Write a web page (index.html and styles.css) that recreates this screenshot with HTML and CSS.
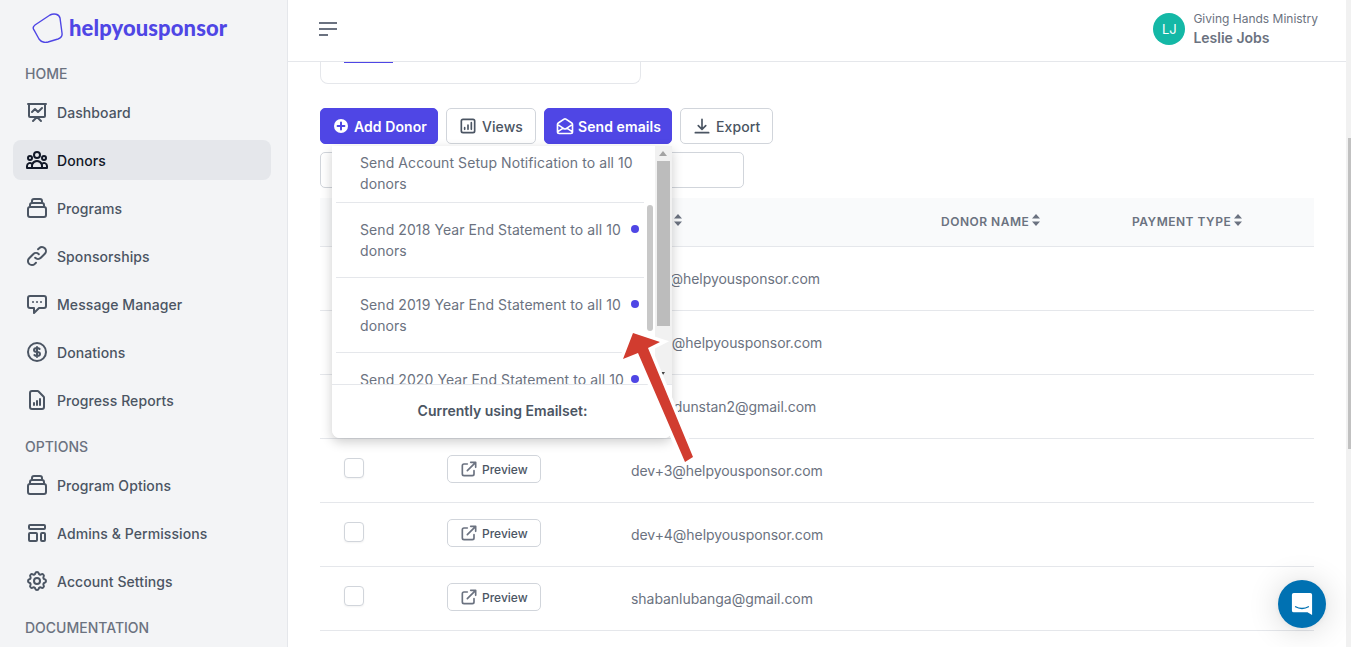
FILE: index.html
```html
<!DOCTYPE html>
<html>

<head>
    <title>Donors</title>
    <link rel="stylesheet" href="styles.css">
</head>

<body>
    <!-- shared icons -->
    <svg class="icon-defs" xmlns="http://www.w3.org/2000/svg">
        <symbol id="i-collection" viewBox="0 0 24 24"><path d="M19 11H5m14 0a2 2 0 012 2v6a2 2 0 01-2 2H5a2 2 0 01-2-2v-6a2 2 0 012-2m14 0V9a2 2 0 00-2-2M5 11V9a2 2 0 012-2m0 0V5a2 2 0 012-2h6a2 2 0 012 2v2M7 7h10"/></symbol>
        <symbol id="i-external" viewBox="0 0 24 24"><path d="M10 6H6a2 2 0 00-2 2v10a2 2 0 002 2h10a2 2 0 002-2v-4M14 4h6m0 0v6m0-6L10 14"/></symbol>
        <symbol id="i-sort" viewBox="0 0 8 12"><path d="M4 0l4 4.500H0zM4 12L0 7.500h8z"/></symbol>
    </svg>

    <div id="app">
        <aside id="sidebar">
            <div class="logo">
                <svg class="logo-mark" viewBox="0 0 32 30"><path d="M2 17C.5 15 1 13.500 3 12L18 2c4-2 9-1 10 3l2 15c.5 3-1 5-4 6l-10 3c-4 1-7 0-9-3z"/></svg>
                <span class="logo-text">helpyousponsor</span>
            </div>

            <div class="nav-label">Home</div>
            <a class="nav-item"><svg class="icon" viewBox="0 0 24 24"><path d="M7 12l3-3 3 3 4-4M8 21l4-4 4 4M3 4h18M4 4h16v12a1 1 0 01-1 1H5a1 1 0 01-1-1V4z"/></svg>Dashboard</a>
            <a class="nav-item active"><svg class="icon" viewBox="0 0 24 24"><path d="M17 20h5v-2a3 3 0 00-5.356-1.857M17 20H7m10 0v-2c0-.656-.126-1.283-.356-1.857M7 20H2v-2a3 3 0 015.356-1.857M7 20v-2c0-.656.126-1.283.356-1.857m0 0a5.002 5.002 0 019.288 0M15 7a3 3 0 11-6 0 3 3 0 016 0zm6 3a2 2 0 11-4 0 2 2 0 014 0zM7 10a2 2 0 11-4 0 2 2 0 014 0z"/></svg>Donors</a>
            <a class="nav-item"><svg class="icon"><use href="#i-collection"/></svg>Programs</a>
            <a class="nav-item"><svg class="icon" viewBox="0 0 24 24"><path d="M13.828 10.172a4 4 0 00-5.656 0l-4 4a4 4 0 105.656 5.656l1.102-1.101m-.758-4.899a4 4 0 005.656 0l4-4a4 4 0 00-5.656-5.656l-1.1 1.1"/></svg>Sponsorships</a>
            <a class="nav-item"><svg class="icon" viewBox="0 0 24 24"><path d="M8 10h.01M12 10h.01M16 10h.01M9 16H5a2 2 0 01-2-2V6a2 2 0 012-2h14a2 2 0 012 2v8a2 2 0 01-2 2h-5l-5 5v-5z"/></svg>Message Manager</a>
            <a class="nav-item"><svg class="icon" viewBox="0 0 24 24"><path d="M12 8c-1.657 0-3 .895-3 2s1.343 2 3 2 3 .895 3 2-1.343 2-3 2m0-8c1.11 0 2.08.402 2.599 1M12 8V7m0 1v8m0 0v1m0-1c-1.11 0-2.08-.402-2.599-1M21 12a9 9 0 11-18 0 9 9 0 0118 0z"/></svg>Donations</a>
            <a class="nav-item"><svg class="icon" viewBox="0 0 24 24"><path d="M9 17v-2m3 2v-4m3 4v-6m2 10H7a2 2 0 01-2-2V5a2 2 0 012-2h5.586a1 1 0 01.707.293l5.414 5.414a1 1 0 01.293.707V19a2 2 0 01-2 2z"/></svg>Progress Reports</a>

            <div class="nav-label">Options</div>
            <a class="nav-item"><svg class="icon"><use href="#i-collection"/></svg>Program Options</a>
            <a class="nav-item"><svg class="icon" viewBox="0 0 24 24"><path d="M4 5a1 1 0 011-1h14a1 1 0 011 1v2a1 1 0 01-1 1H5a1 1 0 01-1-1V5zM4 13a1 1 0 011-1h6a1 1 0 011 1v6a1 1 0 01-1 1H5a1 1 0 01-1-1v-6zM16 13a1 1 0 011-1h2a1 1 0 011 1v6a1 1 0 01-1 1h-2a1 1 0 01-1-1v-6z"/></svg>Admins &amp; Permissions</a>
            <a class="nav-item"><svg class="icon" viewBox="0 0 24 24"><path d="M10.325 4.317c.426-1.756 2.924-1.756 3.35 0a1.724 1.724 0 002.573 1.066c1.543-.94 3.31.826 2.37 2.37a1.724 1.724 0 001.065 2.572c1.756.426 1.756 2.924 0 3.35a1.724 1.724 0 00-1.066 2.573c.94 1.543-.826 3.31-2.37 2.37a1.724 1.724 0 00-2.572 1.065c-.426 1.756-2.924 1.756-3.35 0a1.724 1.724 0 00-2.573-1.066c-1.543.94-3.31-.826-2.37-2.37a1.724 1.724 0 00-1.065-2.572c-1.756-.426-1.756-2.924 0-3.35a1.724 1.724 0 001.066-2.573c-.94-1.543.826-3.31 2.37-2.37.996.608 2.296.07 2.572-1.065z"/><path d="M15 12a3 3 0 11-6 0 3 3 0 016 0z"/></svg>Account Settings</a>

            <div class="nav-label">Documentation</div>
        </aside>

        <div id="main">
            <header id="topbar">
                <svg class="menu-icon" viewBox="0 0 18 14"><path d="M0 1h18M0 7h18M0 13h9"/></svg>
                <div class="user">
                    <div class="avatar">LJ</div>
                    <div>
                        <div class="user-org">Giving Hands Ministry</div>
                        <div class="user-name">Leslie Jobs</div>
                    </div>
                </div>
            </header>

            <div id="content">
                <div class="tab-card"><div class="tab-active"></div></div>

                <div class="toolbar">
                    <button class="btn primary add"><svg class="btn-icon" viewBox="0 0 16 16"><circle cx="8" cy="8" r="7" fill="#fff" stroke="none"/><path class="plus" d="M8 4.600v6.800M4.600 8h6.800"/></svg>Add Donor</button>
                    <button class="btn"><svg class="btn-icon" viewBox="0 0 24 24"><path d="M16 8v8m-4-5v5m-4-2v2m-2 4h12a2 2 0 002-2V6a2 2 0 00-2-2H6a2 2 0 00-2 2v12a2 2 0 002 2z"/></svg>Views</button>
                    <button class="btn primary"><svg class="btn-icon" viewBox="0 0 24 24"><path d="M3 19v-8.930a2 2 0 01.89-1.664l7-4.666a2 2 0 012.220 0l7 4.666A2 2 0 0121 10.070V19M3 19a2 2 0 002 2h14a2 2 0 002-2M3 19l6.750-4.500M21 19l-6.750-4.500M3 10l6.750 4.500M21 10l-6.750 4.500m0 0l-1.140.76a2 2 0 01-2.220 0l-1.140-.76"/></svg>Send emails</button>
                    <button class="btn"><svg class="btn-icon" viewBox="0 0 24 24"><path d="M4 20h16M12 4v12m-4.500-4.500L12 16l4.500-4.500"/></svg>Export</button>
                </div>

                <div class="search-box"></div>

                <table class="donors">
                    <thead>
                        <tr>
                            <th class="col-check"></th>
                            <th class="col-preview"></th>
                            <th class="col-email">Email<svg class="sort"><use href="#i-sort"/></svg></th>
                            <th class="col-name">Donor name<svg class="sort"><use href="#i-sort"/></svg></th>
                            <th>Payment type<svg class="sort"><use href="#i-sort"/></svg></th>
                        </tr>
                    </thead>
                    <tbody>
                        <tr><td><span class="check"></span></td><td><button class="preview"><svg class="preview-icon"><use href="#i-external"/></svg>Preview</button></td><td>dev+1@helpyousponsor.com</td><td></td><td></td></tr>
                        <tr><td><span class="check"></span></td><td><button class="preview"><svg class="preview-icon"><use href="#i-external"/></svg>Preview</button></td><td>dev+2@helpyousponsor.com</td><td></td><td></td></tr>
                        <tr><td><span class="check"></span></td><td><button class="preview"><svg class="preview-icon"><use href="#i-external"/></svg>Preview</button></td><td>philipsdunstan2@gmail.com</td><td></td><td></td></tr>
                        <tr><td><span class="check"></span></td><td><button class="preview"><svg class="preview-icon"><use href="#i-external"/></svg>Preview</button></td><td>dev+3@helpyousponsor.com</td><td></td><td></td></tr>
                        <tr><td><span class="check"></span></td><td><button class="preview"><svg class="preview-icon"><use href="#i-external"/></svg>Preview</button></td><td>dev+4@helpyousponsor.com</td><td></td><td></td></tr>
                        <tr><td><span class="check"></span></td><td><button class="preview"><svg class="preview-icon"><use href="#i-external"/></svg>Preview</button></td><td>shabanlubanga@gmail.com</td><td></td><td></td></tr>
                    </tbody>
                </table>

                <!-- send emails dropdown -->
                <div class="email-menu">
                    <div class="email-list">
                        <div class="email-item first"><span>Send Account Setup Notification to all 10 donors</span></div>
                        <div class="email-item"><span>Send 2018 Year End Statement to all 10 donors</span><i class="dot"></i></div>
                        <div class="email-item"><span>Send 2019 Year End Statement to all 10 donors</span><i class="dot"></i></div>
                        <div class="email-item"><span>Send 2020 Year End Statement to all 10 donors</span><i class="dot"></i></div>
                    </div>
                    <div class="inner-thumb"></div>
                    <div class="menu-scrollbar">
                        <div class="arrow-up"></div>
                        <div class="menu-thumb"></div>
                        <div class="arrow-down"></div>
                    </div>
                    <div class="email-foot">Currently using Emailset:</div>
                </div>

                <!-- red annotation arrow -->
                <svg class="annotation" viewBox="0 0 100 150"><path class="arrow-halo" d="M25 11L52 20 40 26 85 135 77 140 30 31 15 37z"/><path class="arrow-red" d="M25 11L52 20 40 26 85 135 77 140 30 31 15 37z"/></svg>
            </div>
        </div>

        <div class="page-scrollbar"><div class="page-thumb"></div></div>
    </div>

    <div class="chat-bubble">
        <svg viewBox="0 0 24 26"><path d="M3 1h18a2 2 0 012 2v22l-5-3H3a2 2 0 01-2-2V3a2 2 0 012-2z" fill="#fff"/><path d="M5 16c4 2.500 10 2.500 14 0" fill="none" stroke="#0071b2" stroke-width="1.500" stroke-linecap="round"/></svg>
    </div>
</body>

</html>
```

FILE: styles.css
```css
* {
    box-sizing: border-box;
}

html, body {
    margin: 0;
    height: 100%;
    overflow: hidden;
}

body {
    font-family: Inter, "Liberation Sans", sans-serif;
    font-size: 14px;
    color: #4b5563;
    background: #fff;
}

.icon-defs {
    display: none;
}

#app {
    display: flex;
    height: 647px;
}

/* Sidebar */
#sidebar {
    width: 288px;
    flex: none;
    padding: 14px 16px 0 13px;
    background: #f3f4f6;
    border-right: 1px solid #e5e7eb;
    overflow: hidden;
}

.logo {
    display: flex;
    align-items: center;
    height: 28px;
    margin-left: 19px;
    gap: 5px;
}

.logo-mark {
    width: 32px;
    height: 30px;
    flex: none;
    fill: none;
    stroke: #4f46e5;
    stroke-width: 1.400;
}

.logo-text {
    font-family: Lato, sans-serif;
    font-weight: 900;
    font-size: 22px;
    letter-spacing: 0.1px;
    color: #4f46e5;
    position: relative;
    top: -1px;
}

.nav-label {
    margin: 22px 0 8px 12px;
    line-height: 20px;
    font-weight: 500;
    text-transform: uppercase;
    color: #6b7280;
}

.nav-label ~ .nav-label {
    margin-top: 17px;
}

.nav-item {
    display: flex;
    align-items: center;
    height: 40px;
    margin-bottom: 8px;
    padding-left: 12px;
    gap: 8px;
    border-radius: 8px;
    font-weight: 500;
    letter-spacing: 0.08px;
    color: #4b5563;
}

.nav-item:has(+ .nav-label) {
    margin-bottom: 0;
}

.nav-item.active {
    background: #e5e7eb;
    color: #111827;
}

.icon {
    width: 24px;
    height: 24px;
    flex: none;
    fill: none;
    stroke: currentColor;
    stroke-width: 2;
    stroke-linecap: round;
    stroke-linejoin: round;
}

/* Header */
#main {
    flex: 1;
    min-width: 0;
    display: flex;
    flex-direction: column;
}

#topbar {
    display: flex;
    align-items: center;
    justify-content: space-between;
    height: 62px;
    flex: none;
    padding: 0 28px 3px 31px;
    border-bottom: 1px solid #e5e7eb;
}

.menu-icon {
    width: 18px;
    height: 14px;
    fill: none;
    stroke: #6b7280;
    stroke-width: 2;
}

.user {
    display: flex;
    align-items: center;
    gap: 8px;
}

.avatar {
    width: 32px;
    height: 32px;
    border-radius: 50%;
    background: #14b8a6;
    color: #fff;
    font-size: 13px;
    line-height: 32px;
    text-align: center;
}

.user-org {
    font-size: 12px;
    line-height: 18px;
    color: #6b7280;
}

.user-name {
    font-weight: 600;
    line-height: 20px;
    color: #6b7280;
}

/* Main content */
#content {
    position: relative;
    flex: 1;
    padding: 0 32px;
    overflow: hidden;
}

.tab-card {
    width: 321px;
    height: 22px;
    border: 1px solid #e5e7eb;
    border-top: 0;
    border-radius: 0 0 8px 8px;
}

.tab-active {
    width: 49px;
    height: 1px;
    margin-left: 23px;
    background: #4f46e5;
}

.toolbar {
    display: flex;
    gap: 8px;
    margin-top: 24px;
}

.btn {
    display: flex;
    align-items: center;
    height: 36px;
    padding: 0 12px 0 11px;
    gap: 4px;
    background: #fff;
    border: 1px solid #d1d5db;
    border-radius: 5px;
    font-family: inherit;
    font-size: 14px;
    font-weight: 500;
    letter-spacing: 0.08px;
    color: #4b5563;
}

.btn.primary {
    padding: 0 10px;
    gap: 3px;
    background: #4f46e5;
    border-color: #4f46e5;
    color: #fff;
    font-weight: 600;
}

.btn.add {
    padding: 0 10px 0 12px;
    gap: 5px;
}

.btn-icon {
    width: 20px;
    height: 20px;
    flex: none;
    fill: none;
    stroke: currentColor;
    stroke-width: 2;
    stroke-linecap: round;
    stroke-linejoin: round;
}

.add .btn-icon {
    width: 16px;
    height: 16px;
}

.btn-icon .plus {
    stroke: #4f46e5;
}

.search-box {
    width: 424px;
    height: 36px;
    margin-top: 8px;
    border: 1px solid #d1d5db;
    border-radius: 5px;
}

/* Table */
.donors {
    width: 994px;
    margin-top: 10px;
    border-collapse: collapse;
    table-layout: fixed;
}

.donors th {
    height: 48px;
    padding: 0;
    background: #f9fafb;
    border-bottom: 1px solid #e5e7eb;
    font-size: 12px;
    font-weight: 600;
    letter-spacing: 0.5px;
    text-align: left;
    text-transform: uppercase;
    color: #6b7280;
}

.donors td {
    height: 64px;
    padding: 0;
    border-bottom: 1px solid #e5e7eb;
    letter-spacing: -0.05px;
    color: #6b7280;
}

.donors td:nth-child(1) {
    padding-left: 24px;
}

.col-check {
    width: 127px;
}

.col-preview {
    width: 184px;
}

.col-email {
    width: 310px;
}

.col-name {
    width: 191px;
}

.sort {
    width: 8px;
    height: 12px;
    margin-left: 3px;
    vertical-align: 0;
    fill: #6b7280;
}

.check {
    display: block;
    width: 20px;
    height: 20px;
    margin-top: -4px;
    background: #fff;
    border: 1px solid #d1d5db;
    border-radius: 4px;
    box-shadow: 0 1px 2px rgba(0, 0, 0, 0.05);
}

.preview {
    display: flex;
    align-items: center;
    height: 28px;
    width: 94px;
    margin-top: -2px;
    padding: 0 0 0 11px;
    gap: 3px;
    background: #fff;
    border: 1px solid #d1d5db;
    border-radius: 5px;
    font-family: inherit;
    font-size: 12px;
    font-weight: 500;
    color: #4b5563;
}

.preview-icon {
    width: 20px;
    height: 20px;
    flex: none;
    fill: none;
    stroke: #6b7280;
    stroke-width: 2;
    stroke-linecap: round;
    stroke-linejoin: round;
}

/* Send emails dropdown */
.email-menu {
    position: absolute;
    left: 44px;
    top: 84px;
    width: 340px;
    height: 292px;
    overflow: hidden;
    background: #fff;
    border-radius: 0 0 8px 8px;
    box-shadow: 0 4px 12px rgba(0, 0, 0, 0.2);
}

.email-list {
    margin-left: 4px;
    width: 308px;
    height: 239px;
    overflow: hidden;
}

.email-item {
    display: flex;
    align-items: flex-start;
    padding: 16px 0 16px 24px;
    line-height: 21px;
    letter-spacing: 0.08px;
    color: #6b7280;
    border-bottom: 1px solid #e5e7eb;
}

.email-item.first {
    padding: 6px 0 8px 24px;
}

.email-item span {
    flex: 1;
    padding-right: 7px;
}

.dot {
    width: 8px;
    height: 8px;
    margin: 6px 5px 0 0;
    flex: none;
    border-radius: 50%;
    background: #4f46e5;
}

.inner-thumb {
    position: absolute;
    left: 315px;
    top: 59px;
    width: 6px;
    height: 126px;
    border-radius: 3px;
    background: #c8c8c8;
}

.menu-scrollbar {
    position: absolute;
    left: 323px;
    top: 0;
    width: 17px;
    height: 239px;
    background: #f1f1f1;
}

.menu-thumb {
    position: absolute;
    left: 2px;
    top: 15px;
    width: 13px;
    height: 165px;
    background: #bcbcbc;
}

.arrow-up {
    position: absolute;
    left: 4px;
    top: 5px;
    border: 4px solid transparent;
    border-top: 0;
    border-bottom: 5px solid #a3a3a3;
}

.arrow-down {
    position: absolute;
    left: 6px;
    top: 226px;
    border: 2.500px solid transparent;
    border-bottom: 0;
    border-top: 3px solid #444;
}

.email-foot {
    position: absolute;
    left: 0;
    right: 0;
    bottom: 0;
    height: 54px;
    line-height: 52px;
    padding-left: 1px;
    background: #fff;
    border-top: 1px solid #e5e7eb;
    font-weight: 600;
    text-align: center;
    color: #4b5563;
}

.annotation {
    position: absolute;
    left: 320px;
    top: 260px;
    width: 100px;
    height: 150px;
    overflow: visible;
}

.arrow-halo {
    fill: #fff;
    stroke: #fff;
    stroke-width: 7;
}

.arrow-red {
    fill: #d13c2f;
}

/* Page scrollbar and chat */
.page-scrollbar {
    position: relative;
    width: 5px;
    flex: none;
    background: #f1f1f1;
}

.page-thumb {
    position: absolute;
    top: 138px;
    left: 2px;
    width: 3px;
    height: 311px;
    background: #c1c1c1;
}

.chat-bubble {
    position: fixed;
    right: 25px;
    bottom: 19px;
    width: 48px;
    height: 48px;
    display: flex;
    align-items: center;
    justify-content: center;
    border-radius: 50%;
    background: #0071b2;
    box-shadow: 0 1px 6px rgba(0, 0, 0, 0.06), 0 2px 32px rgba(0, 0, 0, 0.16);
}

.chat-bubble svg {
    width: 22px;
    height: 24px;
}
```
